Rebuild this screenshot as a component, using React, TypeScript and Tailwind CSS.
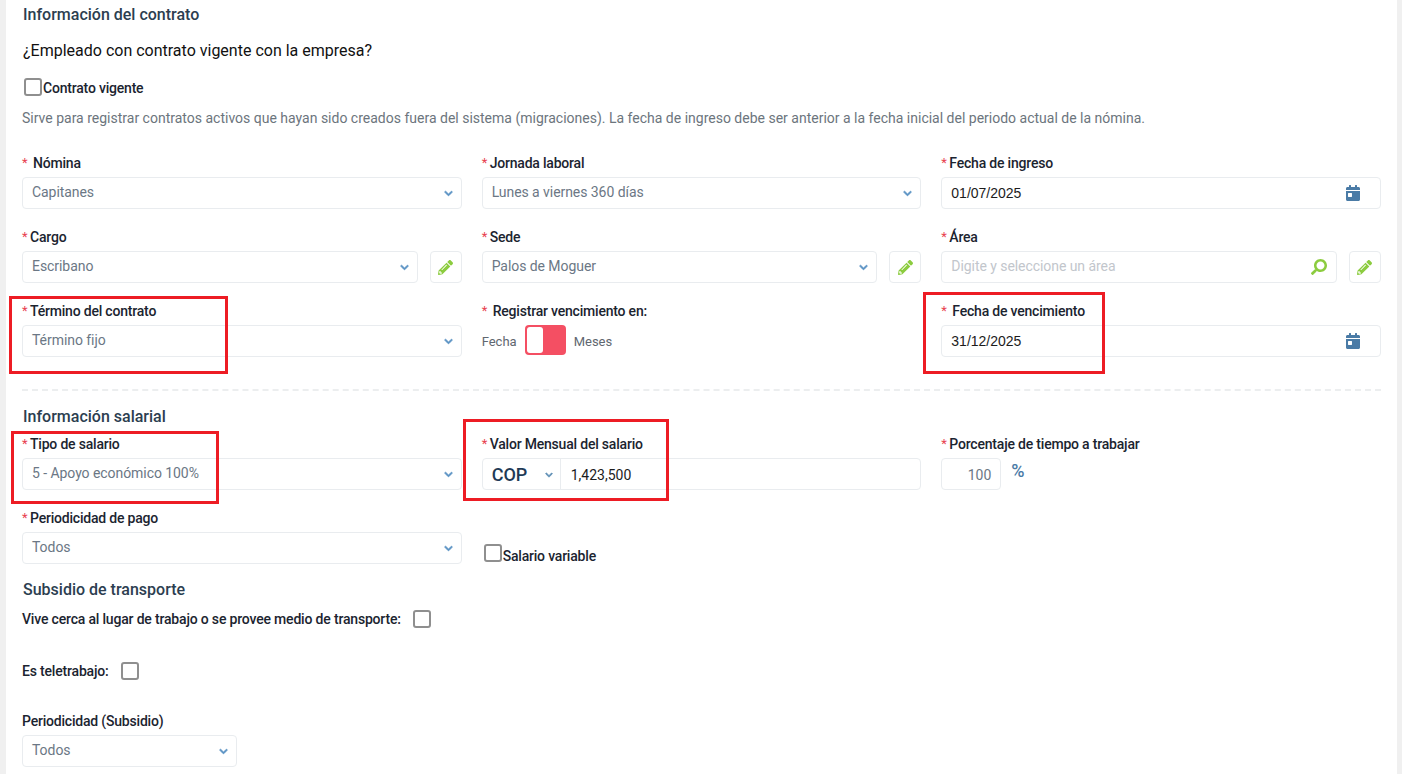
import React from 'react';
import { FaCalendarDay, FaChevronDown, FaPencilAlt, FaSearch } from 'react-icons/fa';

const Label = ({ text, star = true, gap = 'ml-0' }: { text: string; star?: boolean; gap?: string }) => (
  <div className="flex h-5 items-center text-sm font-medium leading-5 tracking-[-0.2px] text-[#1b2430]">
    {star && <span className="mr-[1px] w-[7px] text-[13px] font-normal text-[#e8414f]">*</span>}
    <span className={gap}>{text}</span>
  </div>
);

const Box = ({ children, className = '' }: { children: React.ReactNode; className?: string }) => (
  <div className={`flex h-8 items-center rounded border border-[#e9ecef] bg-white text-sm ${className}`}>{children}</div>
);

const Select = ({ value, className = '' }: { value: string; className?: string }) => (
  <Box className={`justify-between pl-[9px] pr-2 text-[#6b7785] ${className}`}>
    <span className="pb-[2px] tracking-[-0.06px]">{value}</span>
    <FaChevronDown className="h-[9px] w-[9px] stroke-current stroke-[40] text-[#5b93c4]" />
  </Box>
);

const DateInput = ({ value }: { value: string }) => (
  <Box className="justify-between pl-[9px] pr-[20px] font-['Liberation_Sans',sans-serif] text-[#1c1c1c]">
    <span>{value}</span>
    <FaCalendarDay className="h-4 w-[14px] text-[#4a7ba6]" />
  </Box>
);

const EditButton = () => (
  <Box className="w-8 shrink-0 justify-center">
    <FaPencilAlt className="h-[15px] w-[15px] text-[#8ccc3f]" />
  </Box>
);

const Checkbox = () => <span className="inline-block h-[18px] w-[18px] shrink-0 rounded-[3px] border-2 border-[#8f8f8f] bg-white" />;

const RedBox = ({ className }: { className: string }) => (
  <div className={`pointer-events-none absolute border-[3px] border-[#ed1c24] ${className}`} />
);

export default function App() {
  return (
    <div className="relative h-[774px] w-[1402px] overflow-hidden bg-[#f0f0f0] px-[6px] pr-[5px] font-['Roboto',sans-serif]">
      <div className="h-full bg-white px-4 pr-4">
        <h2 className="flex h-[29px] items-center pl-[1px] text-base font-medium text-[#2c3e50]">Información del contrato</h2>
        <p className="mt-[12px] flex h-5 items-center pl-[1px] text-base text-[#111]">¿Empleado con contrato vigente con la empresa?</p>
        <label className="mt-[16px] flex h-5 items-center pl-[2px] text-sm font-medium tracking-[-0.2px] text-[#1b2430]">
          <span className="-mt-[1px] flex"><Checkbox /></span>
          <span className="ml-[1px] mt-[2px]">Contrato vigente</span>
        </label>
        <p className="mt-[11px] flex h-5 items-center text-sm text-[#6c757d]">
          Sirve para registrar contratos activos que hayan sido creados fuera del sistema (migraciones). La fecha de ingreso debe ser anterior a la fecha inicial del periodo actual de la nómina.
        </p>

        <div className="mt-[25px] grid grid-cols-3 gap-x-5 gap-y-[18px]">
          <div>
            <Label text="Nómina" gap="ml-[3px]" />
            <Select value="Capitanes" className="mt-1" />
          </div>
          <div>
            <Label text="Jornada laboral" />
            <Select value="Lunes a viernes 360 días" className="mt-1" />
          </div>
          <div>
            <Label text="Fecha de ingreso" />
            <div className="mt-1"><DateInput value="01/07/2025" /></div>
          </div>

          <div>
            <Label text="Cargo" />
            <div className="mt-1 flex gap-3">
              <Select value="Escribano" className="flex-1" />
              <EditButton />
            </div>
          </div>
          <div>
            <Label text="Sede" />
            <div className="mt-1 flex gap-3">
              <Select value="Palos de Moguer" className="flex-1" />
              <EditButton />
            </div>
          </div>
          <div>
            <Label text="Área" />
            <div className="mt-1 flex gap-3">
              <Box className="flex-1 justify-between pl-[9px] pr-[9px] text-[#c2c6cc]">
                <span className="pb-[2px] tracking-[-0.06px]">Digite y seleccione un área</span>
                <FaSearch className="h-4 w-4 -scale-x-100 text-[#8ccc3f]" />
              </Box>
              <EditButton />
            </div>
          </div>

          <div>
            <Label text="Término del contrato" />
            <Select value="Término fijo" className="mt-1" />
          </div>
          <div>
            <Label text="Registrar vencimiento en:" gap="ml-[3px]" />
            <div className="mt-1 flex h-8 items-start gap-2 text-[13px] leading-[33px] text-[#5f6770]">
              <span>Fecha</span>
              <span className="flex h-[30px] w-[41px] rounded bg-[#f44f63] p-[2px]">
                <span className="h-full w-4 rounded-[3px] bg-white" />
              </span>
              <span>Meses</span>
            </div>
          </div>
          <div>
            <Label text="Fecha de vencimiento" gap="ml-[3px]" />
            <div className="mt-1"><DateInput value="31/12/2025" /></div>
          </div>
        </div>

        <div className="mt-[32px] border-t-2 border-dashed border-[#eceeef]" />

        <h2 className="mt-[16px] flex h-5 items-center pl-[1px] text-base font-medium text-[#2c3e50]">Información salarial</h2>

        <div className="mt-[7px] grid grid-cols-3 gap-x-5 gap-y-[18px]">
          <div>
            <Label text="Tipo de salario" />
            <Select value="5 - Apoyo económico 100%" className="mt-1" />
          </div>
          <div>
            <Label text="Valor Mensual del salario" />
            <Box className="mt-1">
              <span className="flex h-full w-[78px] items-center justify-between border-r border-[#e9ecef] pl-[9px] pr-[7px] pt-[2px] text-[18px] font-medium text-[#1f3a56]">
                COP
                <FaChevronDown className="h-2 w-2 stroke-current stroke-[40] text-[#5f8fb5]" />
              </span>
              <span className="pl-[10px] pt-[1px] text-[#1c1c1c]">1,423,500</span>
            </Box>
          </div>
          <div>
            <Label text="Porcentaje de tiempo a trabajar" />
            <div className="mt-1 flex items-start gap-[10px]">
              <Box className="w-[60px] justify-end pr-[9px] pt-[1px] text-[#6b7785]">100</Box>
              <span className="text-[18px] font-medium leading-[26px] text-[#4a7ba6]">%</span>
            </div>
          </div>
          <div>
            <Label text="Periodicidad de pago" />
            <Select value="Todos" className="mt-1" />
          </div>
          <label className="flex items-end pl-[2px] text-sm font-medium tracking-[-0.2px] text-[#1b2430]">
            <span className="-mb-[1px] flex items-center">
              <Checkbox />
              <span className="ml-[1px] mt-[5px] translate-y-[1px]">Salario variable</span>
            </span>
          </label>
        </div>

        <h2 className="mt-[16px] flex h-5 items-center pl-[1px] text-base font-medium text-[#2c3e50]">Subsidio de transporte</h2>
        <div className="mt-[9px] flex h-5 items-center gap-3 text-sm font-medium tracking-[-0.18px] text-[#1b2430]">
          <span>Vive cerca al lugar de trabajo o se provee medio de transporte:</span>
          <Checkbox />
        </div>
        <div className="mt-[32px] flex h-5 items-center gap-3 text-sm font-medium tracking-[-0.18px] text-[#1b2430]">
          <span>Es teletrabajo:</span>
          <Checkbox />
        </div>
        <div className="mt-[30px] w-[215px]">
          <Label text="Periodicidad (Subsidio)" star={false} />
          <Select value="Todos" className="mt-1" />
        </div>
      </div>

      <RedBox className="left-[9px] top-[296px] h-[78px] w-[219px]" />
      <RedBox className="left-[923px] top-[292px] h-[82px] w-[182px]" />
      <RedBox className="left-[11px] top-[431px] h-[73px] w-[208px]" />
      <RedBox className="left-[463px] top-[419px] h-[82px] w-[206px]" />
    </div>
  );
}
